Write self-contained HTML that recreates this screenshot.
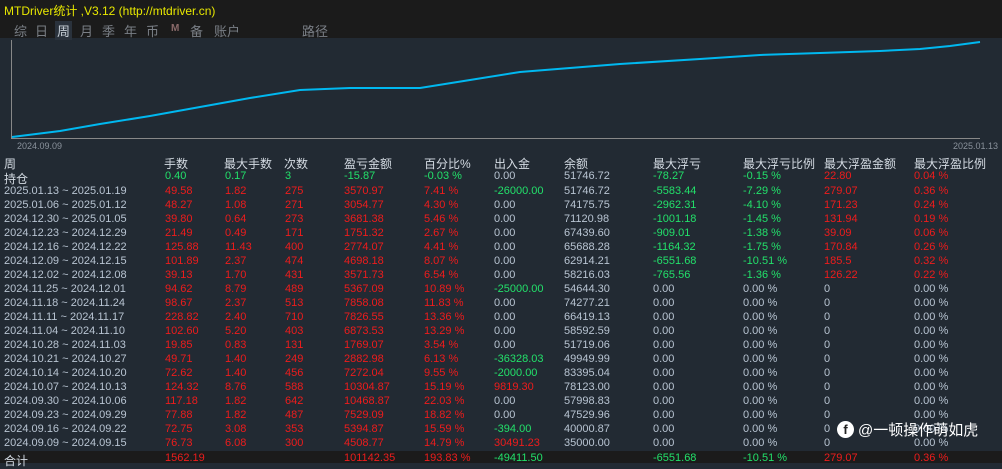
<!DOCTYPE html>
<html><head><meta charset="utf-8"><style>
*{margin:0;padding:0;box-sizing:border-box}
body{width:1002px;height:463px;background:#222a33;overflow:hidden;position:relative;font-family:"Liberation Sans","Noto Sans CJK SC",sans-serif;font-size:11px;color:#b8c4d2}
#top{position:absolute;left:0;top:0;width:1002px;height:38px;background:#1b1b1b}
#title{position:absolute;left:4px;top:2px;color:#e8e800;font-size:12px}
#tabs{position:absolute;top:21px;left:0;font-size:13px;color:#7a7f86}
#tabs span{position:absolute;top:0;white-space:nowrap}
.r{position:absolute;left:0;width:1002px;height:17px;white-space:nowrap}
.r span{position:absolute;top:0}
.g{color:#22e06a}.d{color:#ee1c1c}.h{color:#d4dbe3;font-size:12px}
</style></head><body>
<div id="top">
<div id="title">MTDriver统计 ,V3.12 (http://mtdriver.cn)</div>
<div id="tabs">
<span style="left:14px">综</span><span style="left:35px">日</span>
<span style="left:57px;background:#2a323c;color:#c8d0d8;padding:0 2px;margin-left:-2px">周</span>
<span style="left:80px">月</span><span style="left:102px">季</span><span style="left:124px">年</span><span style="left:146px">币</span>
<span style="left:171px;font-size:10px;top:2px;color:#8a6a6a;font-weight:bold">M</span>
<span style="left:190px">备</span><span style="left:214px">账户</span><span style="left:302px">路径</span>
</div></div>
<svg style="position:absolute;left:0;top:38px" width="1002" height="115">
<line x1="11.5" y1="2" x2="11.5" y2="100" stroke="#888" stroke-width="1"/>
<line x1="11" y1="100.5" x2="980" y2="100.5" stroke="#888" stroke-width="1"/>
<polyline fill="none" stroke="#00b8f0" stroke-width="2" points="12,99 60,93 100,86 150,78 200,69 250,60 300,52 350,50 420,50 470,42 520,34 570,30 620,26 700,21 760,17 820,15 880,13 920,11 950,8 980,4"/>
<text x="17" y="111" fill="#8a929c" font-size="9" font-family="Liberation Sans">2024.09.09</text>
<text x="953" y="111" fill="#8a929c" font-size="9" font-family="Liberation Sans">2025.01.13</text>
</svg>
<div class="r h" style="top:155px"><span style="left:4px">周</span><span style="left:164px">手数</span><span style="left:224px">最大手数</span><span style="left:284px">次数</span><span style="left:344px">盈亏金额</span><span style="left:424px">百分比%</span><span style="left:494px">出入金</span><span style="left:564px">余额</span><span style="left:653px">最大浮亏</span><span style="left:743px">最大浮亏比例</span><span style="left:824px">最大浮盈金额</span><span style="left:914px">最大浮盈比例</span></div>
<div class="r" style="top:170px"><span style="left:4px" class="h">持仓</span><span class="g" style="left:165px">0.40</span><span class="g" style="left:225px">0.17</span><span class="g" style="left:285px">3</span><span class="g" style="left:344px">-15.87</span><span class="g" style="left:424px">-0.03 %</span><span style="left:494px">0.00</span><span style="left:564px">51746.72</span><span class="g" style="left:653px">-78.27</span><span class="g" style="left:743px">-0.15 %</span><span class="d" style="left:824px">22.80</span><span class="d" style="left:914px">0.04 %</span></div>
<div id="rows"></div>
<div style="position:absolute;left:0;top:451px;width:1002px;height:12px;background:#1b1b1b"></div>
<div class="r" style="top:452px"><span style="left:4px" class="h">合计</span><span class="d" style="left:165px">1562.19</span><span class="d" style="left:344px">101142.35</span><span class="d" style="left:424px">193.83 %</span><span class="g" style="left:494px">-49411.50</span><span class="g" style="left:653px">-6551.68</span><span class="g" style="left:743px">-10.51 %</span><span class="d" style="left:824px">279.07</span><span class="d" style="left:914px">0.36 %</span></div>
<div style="position:absolute;left:837px;top:421px;width:17px;height:17px;border-radius:50%;background:#fff;color:#222;font-weight:bold;font-size:13px;text-align:center;line-height:18px">f</div>
<div style="position:absolute;left:858px;top:419px;color:#fff;font-size:15px">@一顿操作萌如虎</div>
<script>
var d=[
["2025.01.13 ~ 2025.01.19","49.58","1.82","275","3570.97","7.41 %","-26000.00","51746.72","-5583.44","-7.29 %","279.07","0.36 %"],
["2025.01.06 ~ 2025.01.12","48.27","1.08","271","3054.77","4.30 %","0.00","74175.75","-2962.31","-4.10 %","171.23","0.24 %"],
["2024.12.30 ~ 2025.01.05","39.80","0.64","273","3681.38","5.46 %","0.00","71120.98","-1001.18","-1.45 %","131.94","0.19 %"],
["2024.12.23 ~ 2024.12.29","21.49","0.49","171","1751.32","2.67 %","0.00","67439.60","-909.01","-1.38 %","39.09","0.06 %"],
["2024.12.16 ~ 2024.12.22","125.88","11.43","400","2774.07","4.41 %","0.00","65688.28","-1164.32","-1.75 %","170.84","0.26 %"],
["2024.12.09 ~ 2024.12.15","101.89","2.37","474","4698.18","8.07 %","0.00","62914.21","-6551.68","-10.51 %","185.5","0.32 %"],
["2024.12.02 ~ 2024.12.08","39.13","1.70","431","3571.73","6.54 %","0.00","58216.03","-765.56","-1.36 %","126.22","0.22 %"],
["2024.11.25 ~ 2024.12.01","94.62","8.79","489","5367.09","10.89 %","-25000.00","54644.30","0.00","0.00 %","0","0.00 %"],
["2024.11.18 ~ 2024.11.24","98.67","2.37","513","7858.08","11.83 %","0.00","74277.21","0.00","0.00 %","0","0.00 %"],
["2024.11.11 ~ 2024.11.17","228.82","2.40","710","7826.55","13.36 %","0.00","66419.13","0.00","0.00 %","0","0.00 %"],
["2024.11.04 ~ 2024.11.10","102.60","5.20","403","6873.53","13.29 %","0.00","58592.59","0.00","0.00 %","0","0.00 %"],
["2024.10.28 ~ 2024.11.03","19.85","0.83","131","1769.07","3.54 %","0.00","51719.06","0.00","0.00 %","0","0.00 %"],
["2024.10.21 ~ 2024.10.27","49.71","1.40","249","2882.98","6.13 %","-36328.03","49949.99","0.00","0.00 %","0","0.00 %"],
["2024.10.14 ~ 2024.10.20","72.62","1.40","456","7272.04","9.55 %","-2000.00","83395.04","0.00","0.00 %","0","0.00 %"],
["2024.10.07 ~ 2024.10.13","124.32","8.76","588","10304.87","15.19 %","9819.30","78123.00","0.00","0.00 %","0","0.00 %"],
["2024.09.30 ~ 2024.10.06","117.18","1.82","642","10468.87","22.03 %","0.00","57998.83","0.00","0.00 %","0","0.00 %"],
["2024.09.23 ~ 2024.09.29","77.88","1.82","487","7529.09","18.82 %","0.00","47529.96","0.00","0.00 %","0","0.00 %"],
["2024.09.16 ~ 2024.09.22","72.75","3.08","353","5394.87","15.59 %","-394.00","40000.87","0.00","0.00 %","0","0.00 %"],
["2024.09.09 ~ 2024.09.15","76.73","6.08","300","4508.77","14.79 %","30491.23","35000.00","0.00","0.00 %","0","0.00 %"]];
var L=[4,165,225,285,344,424,494,564,653,743,824,914],h="";
d.forEach(function(r,i){h+='<div class="r" style="top:'+(184.5+i*14.05).toFixed(1)+'px">';
r.forEach(function(v,j){var c="";if(j>=1&&j<=5)c="d";else if(j==6){c=v.charAt(0)=="-"?"g":(v=="0.00"?"":"d");}
else if(j==8||j==9){c=v.charAt(0)=="-"?"g":"";}else if(j>=10){c=(v=="0"||v=="0.00 %")?"":"d";}
h+='<span class="'+c+'" style="left:'+L[j]+'px">'+v+'</span>';});h+='</div>';});
document.getElementById("rows").innerHTML=h;
</script>
</body></html>
